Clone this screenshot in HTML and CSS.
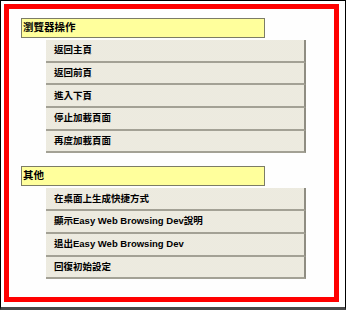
FILE: index.html
```html
<!DOCTYPE html>
<html lang="zh-Hant">
<head>
<meta charset="utf-8">
<title>Easy Web Browsing Dev</title>
<link rel="stylesheet" href="styles.css">
</head>
<body>
<div class="frame">
  <div class="panel">
    <section class="group">
      <div class="group-title">瀏覽器操作</div>
      <ul class="menu">
        <li class="item">返回主頁</li>
        <li class="item">返回前頁</li>
        <li class="item">進入下頁</li>
        <li class="item">停止加載頁面</li>
        <li class="item">再度加載頁面</li>
      </ul>
    </section>
    <section class="group group-second">
      <div class="group-title">其他</div>
      <ul class="menu">
        <li class="item">在桌面上生成快捷方式</li>
        <li class="item">顯示Easy Web Browsing Dev說明</li>
        <li class="item">退出Easy Web Browsing Dev</li>
        <li class="item">回復初始設定</li>
      </ul>
    </section>
  </div>
</div>
</body>
</html>
```

FILE: styles.css
```css
html, body {
  margin: 0;
  padding: 0;
  background: #fff;
}

body {
  font-family: "Liberation Sans", "Noto Sans CJK TC", sans-serif;
  color: #000;
}

.frame {
  width: 346px;
  height: 310px;
  box-sizing: border-box;
  border: 1px solid #000;
  border-bottom: 3px solid #4a4a4a;
  padding: 3px 6px 5px 3px;
  background: #fff;
}

.panel {
  height: 100%;
  box-sizing: border-box;
  border: 5px solid #ff0000;
  padding: 9px 0 0 12px;
  background: #fefefe;
}

.group-second {
  margin-top: 13px;
}

.group-title {
  width: 244px;
  height: 20px;
  box-sizing: border-box;
  background: #ffff9c;
  border: 1px solid #7c7c66;
  font-size: 10.5px;
  font-weight: bold;
  line-height: 17px;
  padding-left: 1px;
  white-space: nowrap;
}

.menu {
  list-style: none;
  margin: 2px 0 0 25px;
  padding: 0;
  width: 260px;
}

.item {
  height: 22.7px;
  box-sizing: border-box;
  display: flex;
  align-items: center;
  padding: 0 0 2px 8px;
  background-color: #ebe9dc;
  background-image: radial-gradient(circle, rgba(255,255,255,0.35) 0.5px, transparent 0.8px);
  background-size: 2px 2px;
  border-bottom: 2px solid #a3a195;
  border-right: 2px solid #8f8d82;
  font-size: 9.5px;
  font-weight: bold;
  white-space: nowrap;
}
```
